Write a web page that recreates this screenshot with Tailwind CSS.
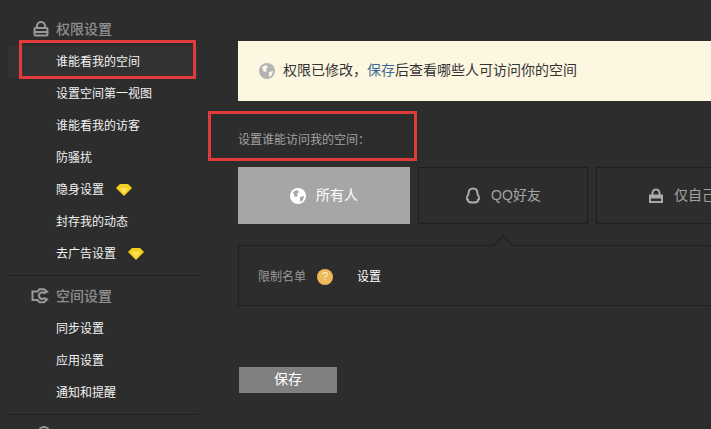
<!doctype html>
<html lang="zh">
<head>
  <meta charset="UTF-8">
  <title>权限设置</title>
  <script src="https://cdn.jsdelivr.net/npm/@tailwindcss/browser@4"></script>
</head>
<body class="relative w-[711px] h-[429px] overflow-hidden bg-[#2d2d2d] font-['Liberation_Sans','Noto_Sans_CJK_SC',sans-serif]">

  <div class="flex h-full">
    <!-- sidebar -->
    <div class="w-[238px] shrink-0 pl-2 pt-[19px]">
      <div class="w-[190px]">
        <div class="flex items-center h-5 pl-[25px] text-[14px] text-[#8f8f8f] font-medium">
          <svg class="w-4 h-4 mr-[7px]" viewBox="0 0 16 16" fill="none" stroke="#999" stroke-width="2"><path d="M4 7V5a4 4 0 0 1 8 0v2"/><rect x="1.500" y="7" width="13" height="7.500" rx="1"/><path d="M2 11h12"/></svg>
          权限设置
        </div>
        <div class="mt-[7px] text-[12px] text-[#f2f2f2]">
          <div class="flex items-center h-8 pl-12 bg-[#323232]">谁能看我的空间</div>
          <div class="flex items-center h-8 pl-12">设置空间第一视图</div>
          <div class="flex items-center h-8 pl-12">谁能看我的访客</div>
          <div class="flex items-center h-8 pl-12">防骚扰</div>
          <div class="flex items-center h-8 pl-12">隐身设置
            <svg class="w-4 h-3 ml-3" viewBox="0 0 16 12"><path d="M4 0h8l4 4-8 8-8-8z" fill="#f5cf1e"/><path d="M4 4h8l-4 6z" fill="#ffe45c"/></svg>
          </div>
          <div class="flex items-center h-8 pl-12">封存我的动态</div>
          <div class="flex items-center h-8 pl-12">去广告设置
            <svg class="w-4 h-3 ml-3" viewBox="0 0 16 12"><path d="M4 0h8l4 4-8 8-8-8z" fill="#f5cf1e"/><path d="M4 4h8l-4 6z" fill="#ffe45c"/></svg>
          </div>
        </div>
        <div class="mt-[5px] border-t border-[#1f1f1f]"></div>
        <div class="flex items-center h-5 mt-[10px] pl-[23px] text-[14px] text-[#8f8f8f] font-medium">
          <svg class="w-[18px] h-4 mr-[7px]" viewBox="0 0 18 16" fill="none" stroke="#999" stroke-width="2"><path d="M1.500 3.500h5l2-2.200h4.500l3 2.500-3 1.200a3.200 3.200 0 1 0 0 5.200l3 1.200-3 2.800H8.500l-2-2.200h-5z"/></svg>
          空间设置
        </div>
        <div class="mt-[7px] text-[12px] text-[#f2f2f2]">
          <div class="flex items-center h-8 pl-12">同步设置</div>
          <div class="flex items-center h-8 pl-12">应用设置</div>
          <div class="flex items-center h-8 pl-12">通知和提醒</div>
        </div>
        <div class="mt-[5px] border-t border-[#1f1f1f]"></div>
        <div class="mt-[11px] pl-[30px]">
          <div class="w-3 h-3 rounded-full border-2 border-[#999]"></div>
        </div>
      </div>
    </div>

    <!-- main -->
    <div class="flex-1 min-w-0 overflow-hidden pt-[41px]">
      <div class="flex items-center h-[60px] pl-[21px] pb-px bg-[#fdf7e2] text-[14px] text-[#333333] whitespace-nowrap">
        <svg class="w-4 h-4 mr-2" viewBox="0 0 16 16"><circle cx="8" cy="8" r="8" fill="#b4b4b4"/><path d="M3 4l4-2 2 2-2 2 1 2-3 1zM10 9l4-1-1 4-3 2z" fill="#fdf7e2"/></svg>
        权限已修改，<span class="text-[#3d6a94]">保存</span>后查看哪些人可访问你的空间
      </div>
      <div class="mt-[31px] text-[12px] leading-[16px] text-[#a3a3a3]">设置谁能访问我的空间：</div>
      <div class="flex gap-2 mt-[19px] w-[520px] h-[57px]">
        <div class="flex items-center justify-center shrink-0 w-[172px] bg-[#a6a6a6] text-[14px] text-white">
          <svg class="w-4 h-4 mr-[10px]" viewBox="0 0 16 16"><circle cx="8" cy="8" r="8" fill="#fff"/><path d="M3 4l4-2 2 2-2 2 1 2-3 1zM10 9l4-1-1 4-3 2z" fill="#a6a6a6"/></svg>
          所有人
        </div>
        <div class="flex items-center justify-center shrink-0 w-[170px] border border-[#1f1f1f] text-[14px] text-[#a3a3a3]">
          <svg class="w-4 h-[18px] mr-[10px]" viewBox="0 0 16 18" fill="none" stroke="#aaa" stroke-width="2"><path d="M8 1.500c3 0 4.500 2.300 4.500 5 0 1 .5 1.500 1.200 3 .7 2 .3 3.500-.7 3.500H13c.5 2-2 2.500-5 2.500s-5.500-.5-5-2.500c-1 0-1.400-1.500-.7-3.500.7-1.500 1.200-2 1.200-3 0-2.700 1.500-5 4.500-5z"/></svg>
          QQ好友
        </div>
        <div class="flex items-center shrink-0 w-[170px] pl-[52px] border border-[#1f1f1f] text-[14px] text-[#a3a3a3] whitespace-nowrap">
          <svg class="w-[14px] h-[15px] mr-[11px]" viewBox="0 0 14 15"><path d="M3.500 7V5a3.500 3.500 0 0 1 7 0v2" fill="none" stroke="#aaa" stroke-width="2"/><path d="M0 6.500h14V15H0z" fill="#aaa"/><path d="M2 10.500h10V13H2z" fill="#2d2d2d"/></svg>
          仅自己
        </div>
      </div>
      <div class="relative flex items-center mt-[21px] w-[520px] h-[61px] pl-[19px] pt-[2px] border border-[#1f1f1f] border-r-0 text-[12px]">
        <div class="absolute -top-2 left-[257px] w-[14px] h-[14px] rotate-45 border-l border-t border-[#1f1f1f] bg-[#2d2d2d]"></div>
        <span class="text-[#999999]">限制名单</span>
        <span class="flex items-center justify-center ml-[11px] w-4 h-4 rounded-full bg-[#edb95c] text-[11px] text-[#fdf1d2]">?</span>
        <span class="ml-6 text-white">设置</span>
      </div>
      <div class="flex items-center justify-center mt-[61px] ml-px pb-px w-[98px] h-[26px] bg-[#808080] text-[14px] text-white">保存</div>
    </div>
  </div>

  <!-- red annotation boxes -->
  <div class="absolute left-[19px] top-10 w-[177px] h-[39px] border-[3px] border-[#e23b3b]"></div>
  <div class="absolute left-[208px] top-[111px] w-[209px] h-[50px] border-[3px] border-[#e23b3b]"></div>
</body>
</html>
